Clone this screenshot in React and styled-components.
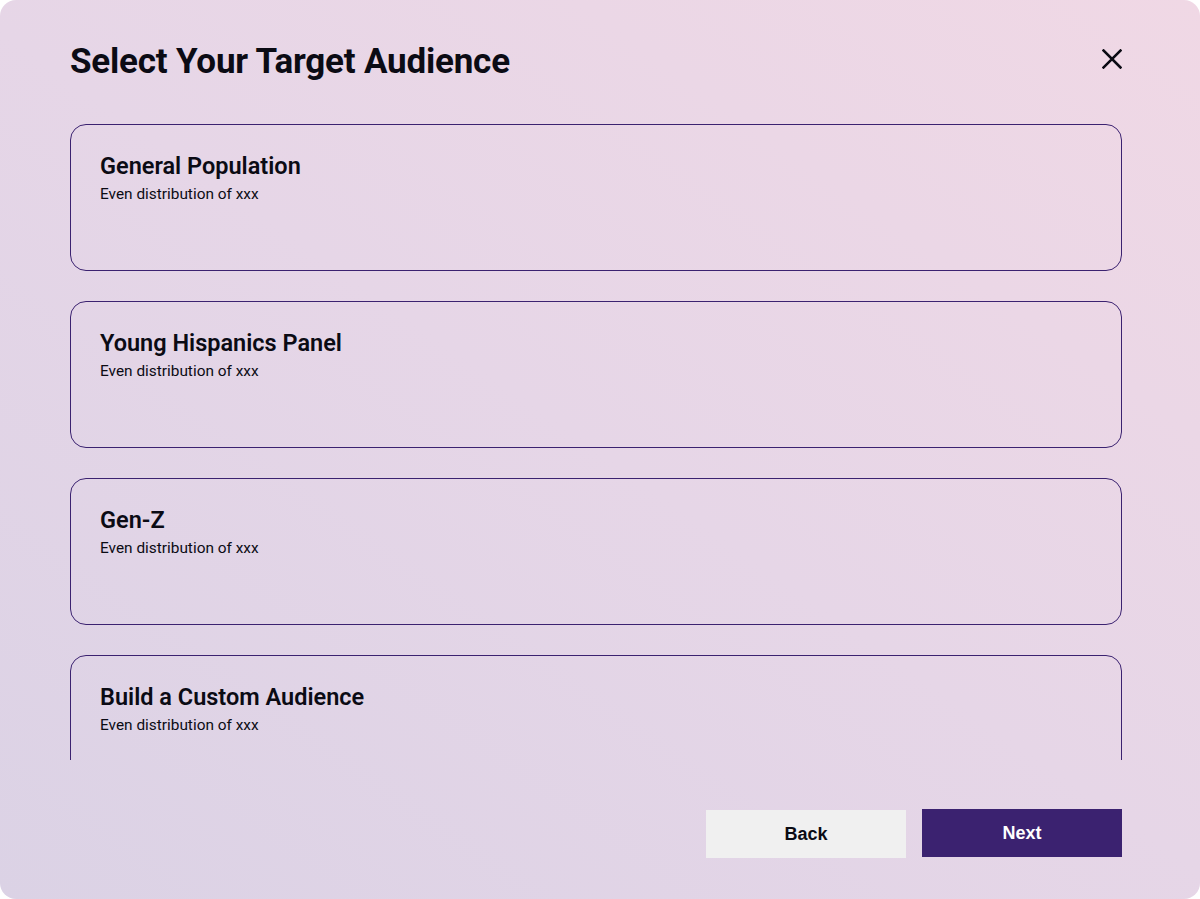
import styled, { createGlobalStyle } from "styled-components";

const GlobalStyle = createGlobalStyle`
  html, body {
    margin: 0;
    padding: 0;
    background: #ffffff;
  }
  * {
    box-sizing: border-box;
  }
`;

const audiences = [
  { title: "General Population", text: "Even distribution of xxx" },
  { title: "Young Hispanics Panel", text: "Even distribution of xxx" },
  { title: "Gen-Z", text: "Even distribution of xxx" },
  { title: "Build a Custom Audience", text: "Even distribution of xxx" },
];

const CloseIcon = () => (
  <svg width="20" height="20" viewBox="0 0 20 20" fill="none">
    <path d="M1.5 1.5L18.5 18.5M18.5 1.5L1.5 18.5" stroke="#0b0b14" strokeWidth="2.5" strokeLinecap="square" />
  </svg>
);

const App = () => {
  return (
    <>
      <GlobalStyle />
      <Panel>
        <Header>
          <Title>Select Your Target Audience</Title>
          <CloseButton aria-label="close">
            <CloseIcon />
          </CloseButton>
        </Header>
        <List>
          {audiences.map((a) => (
            <Card key={a.title}>
              <CardTitle>{a.title}</CardTitle>
              <CardText>{a.text}</CardText>
            </Card>
          ))}
        </List>
        <Footer>
          <Button>Back</Button>
          <Button primary>Next</Button>
        </Footer>
      </Panel>
    </>
  );
};

const Panel = styled.div`
  width: 1200px;
  height: 899px;
  border-radius: 16px;
  background: linear-gradient(35deg, #dbd2e5 0%, #e6d6e7 50%, #f0d8e5 100%);
  display: flex;
  flex-direction: column;
  padding: 35px 78px 41px 70px;
  overflow: hidden;
`;

const Header = styled.div`
  display: flex;
  justify-content: space-between;
  align-items: center;
  height: 52px;
`;

const Title = styled.h1`
  margin: 0;
  font-family: Roboto, "Liberation Sans", sans-serif;
  font-size: 35px;
  font-weight: 700;
  letter-spacing: -0.2px;
  color: #0b0b14;
`;

const CloseButton = styled.button`
  align-self: flex-start;
  margin-top: 14px;
  background: transparent;
  border: none;
  padding: 0;
  width: 20px;
  height: 20px;
  display: flex;
  cursor: pointer;
`;

const List = styled.div`
  margin-top: 37px;
  height: 636px;
  overflow: hidden;
  display: flex;
  flex-direction: column;
  gap: 30px;
`;

const Card = styled.div`
  flex: none;
  height: 147px;
  border: 1px solid #3b2270;
  border-radius: 16px;
  padding: 27px 29px;
`;

const CardTitle = styled.div`
  font-family: Roboto, "Liberation Sans", sans-serif;
  font-size: 23.5px;
  font-weight: 600;
  color: #0b0b14;
  line-height: 28px;
`;

const CardText = styled.div`
  margin-top: 4px;
  font-family: Roboto, "Liberation Sans", sans-serif;
  font-size: 15.4px;
  color: #0b0b14;
  line-height: 20px;
`;

const Footer = styled.div`
  margin-top: auto;
  display: flex;
  justify-content: flex-end;
  align-items: flex-start;
  gap: 16px;
`;

const Button = styled.button`
  width: 200px;
  height: 48px;
  margin-top: ${(p) => (p.primary ? "0" : "1px")};
  border: none;
  background: ${(p) => (p.primary ? "#3b2270" : "#f0f0f0")};
  color: ${(p) => (p.primary ? "#ffffff" : "#0b0b14")};
  font-family: "Liberation Sans", Arial, sans-serif;
  font-size: 18px;
  font-weight: 700;
  cursor: pointer;
`;

export default App;
